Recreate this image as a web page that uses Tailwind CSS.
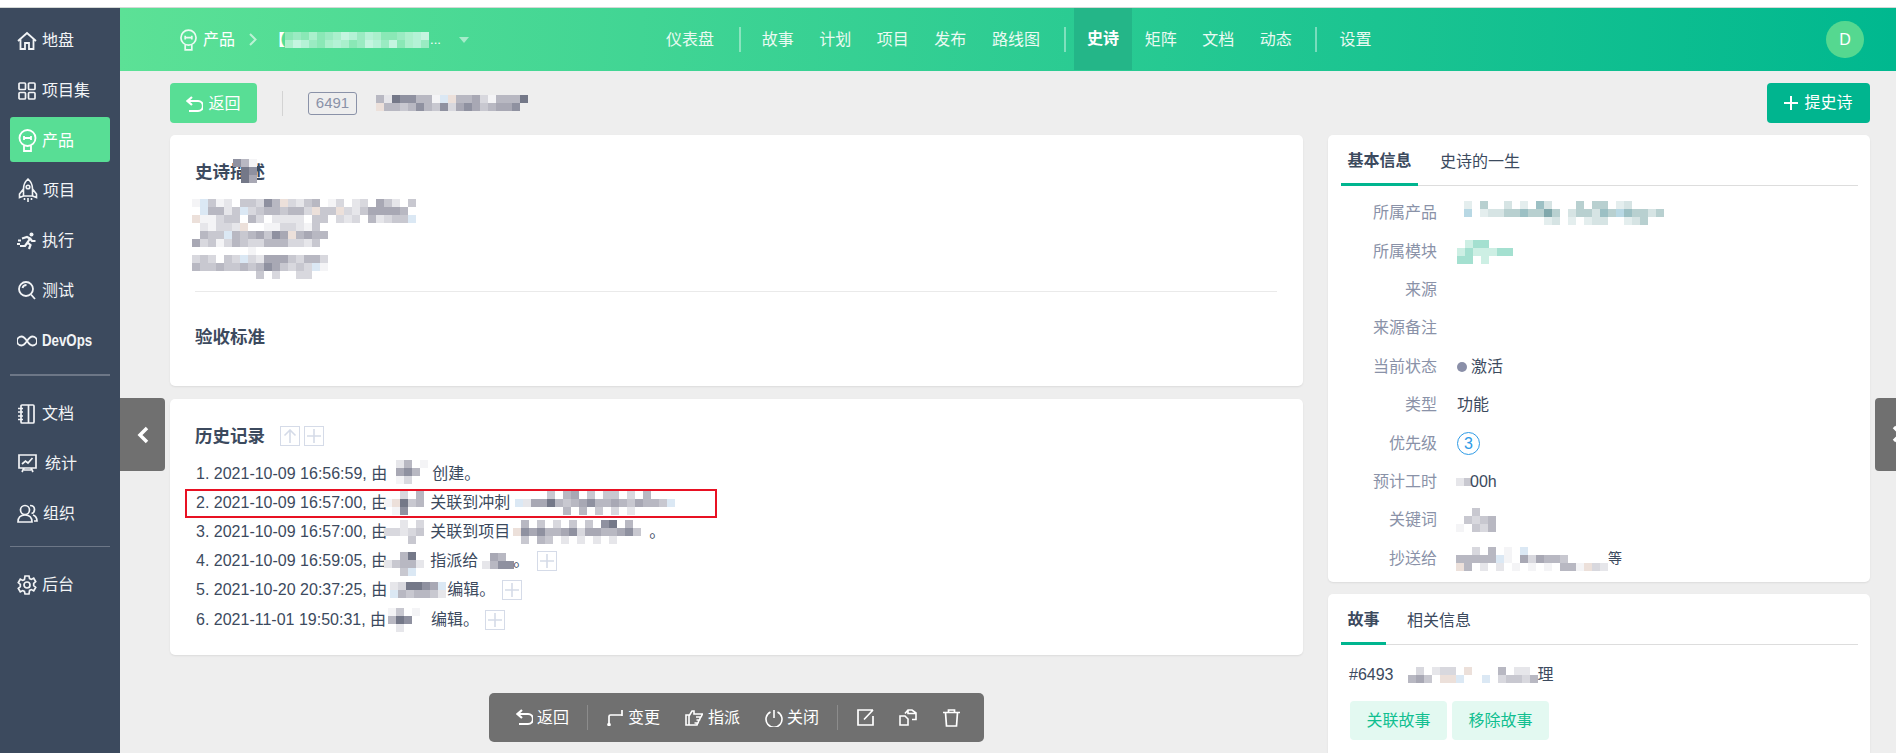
<!DOCTYPE html>
<html lang="zh-CN">
<head>
    <meta charset="UTF-8">
    <title>史诗详情</title>
    <script src="https://cdn.jsdelivr.net/npm/@tailwindcss/browser@4"></script>
</head>
<body class="w-[1896px] h-[753px] overflow-hidden bg-[#eeeeee] text-[16px] text-[#3c4a5e] font-['Liberation_Sans','Noto_Sans_CJK_SC',sans-serif]">
    <div class="h-[8px] bg-white border-b border-[#d4d8d6]"></div>
    <div class="flex h-[745px]">
        <!-- 左侧菜单 -->
        <nav class="w-[120px] shrink-0 bg-[#3c4a5e] px-[10px] pt-[9px] text-[#f2f4f6]">
            <div class="flex flex-col gap-[5px]">
                <a class="h-[45px] flex items-center gap-[5px] pl-[7px] pt-[2px]">
                    <svg class="w-[20px] h-[20px]" viewBox="0 0 20 20" fill="none" stroke="currentColor" stroke-width="1.8"><path d="M1 10 10 2l9 8M3.5 8.5V18h4.5v-6h4v6h4.5V8.5"/></svg>地盘</a>
                <a class="h-[45px] flex items-center gap-[6px] pl-[8px] pt-[2px]">
                    <svg class="w-[18px] h-[18px]" viewBox="0 0 18 18" fill="none" stroke="currentColor" stroke-width="1.7"><rect x="1" y="1" width="6.5" height="6.5" rx="1"/><rect x="10.5" y="1" width="6.5" height="6.5" rx="1"/><rect x="1" y="10.5" width="6.5" height="6.5" rx="1"/><rect x="10.5" y="10.5" width="6.5" height="6.5" rx="1"/></svg>项目集</a>
                <a class="h-[45px] flex items-center gap-[5px] pl-[8px] pt-[2px] bg-[#58de95] rounded-[3px] text-white">
                    <svg class="w-[19px] h-[23px]" viewBox="0 0 18 23" fill="none" stroke="currentColor" stroke-width="1.8"><circle cx="9" cy="9" r="8"/><path d="M5.5 16.5V22h7v-5.5M5.5 7v4M12.5 7v4M5.5 9h7"/></svg>产品</a>
                <a class="h-[45px] flex items-center gap-[5px] pl-[8px] pt-[2px]">
                    <svg class="w-[20px] h-[25px]" viewBox="0 0 20 25" fill="none" stroke="currentColor" stroke-width="1.6"><path d="M10 1c3.5 3 4.5 7 4.5 10v7h-9v-7C5.5 8 6.5 4 10 1ZM5.5 11 1.5 16v3.5l4-1.5M14.5 11l4 5v3.5l-4-1.500"/><circle cx="10" cy="9" r="1.8"/><path d="M6.5 20v2M10 20v4M13.5 20v2"/></svg>项目</a>
                <a class="h-[45px] flex items-center gap-[5px] pl-[7px] pt-[2px]">
                    <svg class="w-[20px] h-[18px]" viewBox="0 0 20 18" fill="none" stroke="currentColor" stroke-width="2.2"><circle cx="14.5" cy="2.5" r="2" fill="currentColor" stroke="none"/><path d="M5 6.5l5-1.500 3 1.500-2.500 4 3 2.500-1.500 4M10.500 10.500 8 14H3M13 6.500l2 2.500h3.500M1 8.500h3M0 12h3"/></svg>执行</a>
                <a class="h-[45px] flex items-center gap-[6px] pl-[8px] pt-[2px]">
                    <svg class="w-[18px] h-[19px]" viewBox="0 0 18 19" fill="none" stroke="currentColor" stroke-width="1.8"><circle cx="8" cy="8" r="7"/><path d="M13 13.5l4 4.5M4.5 7c.5-2 2-3 4-3"/></svg>测试</a>
                <a class="h-[45px] flex items-center gap-[5px] pl-[7px] pt-[2px] font-bold">
                    <svg class="w-[20px] h-[12px] shrink-0" viewBox="0 0 20 12" fill="none" stroke="currentColor" stroke-width="1.8"><path d="M10 6C8 3 6.5 1.5 4.5 1.5a4.5 4.5 0 0 0 0 9C6.5 10.5 8 9 10 6c2-3 3.5-4.5 5.5-4.5a4.5 4.5 0 0 1 0 9C13.5 10.5 12 9 10 6Z"/></svg>
                    <span class="inline-block origin-left scale-x-[0.83]">DevOps</span></a>
            </div>
            <div class="h-[2px] bg-[#6d7787] mt-[12px] mb-[14px]"></div>
            <div class="flex flex-col gap-[5px]">
                <a class="h-[45px] flex items-center gap-[7px] pl-[8px] pt-[2px]">
                    <svg class="w-[17px] h-[20px]" viewBox="0 0 17 20" fill="none" stroke="currentColor" stroke-width="1.7"><rect x="3" y="1" width="13" height="18" rx="1"/><path d="M10.5 1v18M0 4.5h5M0 8h5M0 12h5M0 15.5h5"/></svg>文档</a>
                <a class="h-[45px] flex items-center gap-[8px] pl-[8px] pt-[2px]">
                    <svg class="w-[19px] h-[19px]" viewBox="0 0 19 19" fill="none" stroke="currentColor" stroke-width="1.7"><path d="M1 1h17v13H1zM4 10l3.5-3 2.5 2 4.5-5M6 14l-2 4M13 14l2 4M6 16h7"/></svg>统计</a>
                <a class="h-[45px] flex items-center gap-[5px] pl-[7px] pt-[2px]">
                    <svg class="w-[21px] h-[19px]" viewBox="0 0 21 19" fill="none" stroke="currentColor" stroke-width="1.7"><circle cx="8" cy="6" r="4.5"/><path d="M1 18c0-5 3-7 7-7s7 2 7 7ZM13 1.5c3 0 4.5 2 4.5 4 0 2-1 3.5-3 4M16 11c2.5 1 4 3 4 6h-3"/></svg>组织</a>
            </div>
            <div class="h-px bg-[#6d7787] mt-[11px] mb-[14px]"></div>
            <a class="h-[45px] flex items-center gap-[5px] pl-[7px] pt-[2px]">
                <svg class="w-[20px] h-[20px]" viewBox="0 0 20 20" fill="none" stroke="currentColor" stroke-width="1.7"><path d="M8 1h4l.6 2.6 1.7.8 2.4-1.200 2 3.400-2 1.700v2.400l2 1.700-2 3.400-2.400-1.200-1.700.8L12 19H8l-.6-2.600-1.700-.8-2.400 1.200-2-3.400 2-1.700V9.300l-2-1.700 2-3.400 2.400 1.200 1.700-.8Z"/><circle cx="10" cy="10" r="3"/></svg>后台</a>
        </nav>

        <main class="relative flex-1 min-w-0 overflow-hidden">
            <!-- 顶部导航 -->
            <header class="h-[63px] flex items-center text-[#eafaf2] bg-[linear-gradient(92deg,#5ce196,#00b88f)]">
                <div class="w-[533px] pl-[60px] flex items-center shrink-0">
                    <svg class="w-[17px] h-[22px] mr-[6px]" viewBox="0 0 18 23" fill="none" stroke="currentColor" stroke-width="1.8"><circle cx="9" cy="9" r="8"/><path d="M5.5 16.5V22h7v-5.5M5.5 7v4M12.5 7v4M5.5 9h7"/></svg>
                    <span class="text-white">产品</span>
                    <svg class="w-[8px] h-[13px] ml-[14px] mr-[12px] text-white/60" viewBox="0 0 8 13" fill="none" stroke="currentColor" stroke-width="2"><path d="M1 1l5.500 5.500L1 12"/></svg>
                    <span class="w-[16px] text-white font-bold">【</span>
                    <svg data-m="abacabcedbdcaabcde/cedbacdcabedbeacdb" data-p="g" class="shrink-0"></svg>
                    <span class="text-[13px] text-white ml-[1px] w-[13px]">...</span>
                    <span class="ml-[16px] w-0 h-0 border-x-[5px] border-x-transparent border-t-[6px] border-t-white/50"></span>
                </div>
                <div class="flex items-center h-full">
                    <a class="pl-[13px] pr-[15px]">仪表盘</a>
                    <span class="w-[2px] h-[25px] bg-white/40 ml-[10px] mr-[8px]"></span>
                    <a class="w-[57.5px] text-center">故事</a>
                    <a class="w-[57.5px] text-center">计划</a>
                    <a class="w-[57.5px] text-center">项目</a>
                    <a class="w-[57.5px] text-center">发布</a>
                    <a class="pl-[13px] pr-[14px]">路线图</a>
                    <span class="w-[2px] h-[25px] bg-white/40 ml-[10px] mr-[8px]"></span>
                    <a class="w-[58px] h-[62px] mb-px flex items-center justify-center bg-[#24b688] text-white font-bold">史诗</a>
                    <a class="w-[57.5px] text-center">矩阵</a>
                    <a class="w-[57.5px] text-center">文档</a>
                    <a class="w-[57.5px] text-center">动态</a>
                    <span class="w-[2px] h-[25px] bg-white/40 ml-[10px] mr-[10px]"></span>
                    <a class="w-[58px] text-center">设置</a>
                </div>
                <div class="ml-auto mr-[32px] w-[38px] h-[37px] rounded-full bg-[#55d890] flex items-center justify-center text-white">D</div>
            </header>

            <!-- 工具栏 -->
            <div class="flex items-center h-[40px] mt-[12px] ml-[50px] mr-[26px]">
                <button class="h-[40px] w-[87px] bg-[#58de95] rounded-[4px] text-white flex items-center justify-center gap-[5px] pt-[2px]">
                    <svg class="w-[17px] h-[17px]" viewBox="0 0 17 17" fill="none" stroke="currentColor" stroke-width="2.2"><path d="M6 1 1.500 5 6 9M2 5h10a3.800 3.800 0 0 1 0 10H3"/></svg>返回
                </button>
                <span class="w-px h-[25px] bg-[#d3d3d3] ml-[25px] mr-[25px]"></span>
                <span class="w-[49px] h-[23px] border border-[#8a92a8] rounded-[3px] text-[#8a92a8] text-[15px] flex items-center justify-center">6491</span>
                <svg data-m="5287755 1bp5563 15558/p554575473 67645667" data-p="n" class="ml-[19px]"></svg>
                <button class="ml-auto h-[40px] w-[103px] bg-[#00b58f] rounded-[4px] text-white flex items-center justify-center gap-[6px]">
                    <svg class="w-[14px] h-[14px]" viewBox="0 0 14 14" stroke="currentColor" stroke-width="2"><path d="M7 0v14M0 7h14"/></svg>提史诗
                </button>
            </div>

            <div class="flex gap-[25px] mt-[12px] ml-[50px] mr-[26px]">
                <!-- 左栏 -->
                <div class="w-[1133px] flex flex-col gap-[13px]">
                    <section class="h-[251px] bg-white rounded-[5px] shadow-[0_1px_2px_rgba(0,0,0,0.08)] pl-[25px] pr-[26px] pt-[24px]">
                        <div class="relative">
                            <h2 class="h-[26px] leading-[26px] text-[17.5px] font-bold">史诗描述</h2>
                            <svg data-m="751/.87/.86" data-p="n" class="absolute left-[38px] top-0"></svg>
                        </div>
                        <svg data-m="1b412.44375p3245.13.23.642.4/.b5524b34554553p44p32466665/p1134 4.53.2222.44.323.5234 4b/.21332p..1133214/.544b5456476p5655/63413543355533 24/.......1/343.43b3266643553/5445445457643 43b1/........4.3..33" data-p="n" class="-ml-[3px] mt-[14px] h-[80px]"></svg>
                        <div class="h-px bg-[#eaeaea] mt-[12px]"></div>
                        <h2 class="h-[26px] leading-[26px] text-[17.5px] font-bold mt-[32px]">验收标准</h2>
                    </section>

                    <section class="h-[256px] bg-white rounded-[5px] shadow-[0_1px_2px_rgba(0,0,0,0.08)] pl-[25px] pt-[24px]">
                        <div class="flex items-center h-[26px]">
                            <h2 class="text-[17.5px] font-bold">历史记录</h2>
                            <span class="ml-[15px] w-[20px] h-[20px] border border-[#d5dbe8] flex items-center justify-center text-[#d5dbe8]">
                                <svg class="w-[14px] h-[14px]" viewBox="0 0 14 14" fill="none" stroke="currentColor" stroke-width="1.6"><path d="M7 14V1M1.500 6.500 7 1l5.500 5.500"/></svg>
                            </span>
                            <span class="ml-[4px] w-[20px] h-[20px] border border-[#d5dbe8] flex items-center justify-center text-[#d5dbe8]">
                                <svg class="w-[14px] h-[14px]" viewBox="0 0 14 14" stroke="currentColor" stroke-width="1.6"><path d="M7 0v14M0 7h14"/></svg>
                            </span>
                        </div>
                        <ol class="mt-[10px] pl-px">
                            <li class="h-[29.2px] flex items-center">1. 2021-10-09 16:56:59, 由
                                <svg data-m=".25.1/.675/.13." data-p="n" class="ml-[1px] -mt-[4px]"></svg>
                                <span class="ml-[4px]">创建。</span></li>
                            <li class="h-[29.2px] flex items-center">2. 2021-10-09 16:57:00, 由
                                <svg data-m="..3.5/1p845/.17.." data-p="n" class="-ml-[3px]"></svg>
                                <span class="ml-[6px]">关联到冲刺</span>
                                <svg data-m="....4.56.4.44.3.5../b266854567556546554b/......5.5.4.3.2..." data-p="n" class="ml-[5px]"></svg></li>
                            <li class="h-[29.2px] flex items-center">3. 2021-10-09 16:57:00, 由
                                <svg data-m="..2.3/33234/...4." data-p="n" class="-ml-[3px]"></svg>
                                <span class="ml-[6px]">关联到项目</span>
                                <svg data-m=".5.4.3.4.4.78.5./p767556736655674/.4.54.2.2.2.2...." data-p="n" class="ml-[3px]"></svg>
                                <span>。</span></li>
                            <li class="h-[29.2px] flex items-center">4. 2021-10-09 16:59:05, 由
                                <svg data-m="..58./24552/..4b." data-p="n" class="-ml-[3px] mt-[6px]"></svg>
                                <span class="ml-[6px]">指派给</span>
                                <svg data-m=".65/2577" data-p="n" class="ml-[4px]"></svg>
                                <span class="-ml-[1px]">。</span>
                                <span class="ml-[8px] w-[20px] h-[20px] border border-[#d5dbe8] flex items-center justify-center text-[#d5dbe8]"><svg class="w-[14px] h-[14px]" viewBox="0 0 14 14" stroke="currentColor" stroke-width="1.6"><path d="M7 0v14M0 7h14"/></svg></span></li>
                            <li class="h-[29.2px] flex items-center">5. 2021-10-20 20:37:25, 由
                                <svg data-m="238876b/b545542" data-p="n" class="ml-[3px]"></svg>
                                <span class="ml-[1px]">编辑。</span>
                                <span class="ml-[7px] w-[20px] h-[20px] border border-[#d5dbe8] flex items-center justify-center text-[#d5dbe8]"><svg class="w-[14px] h-[14px]" viewBox="0 0 14 14" stroke="currentColor" stroke-width="1.6"><path d="M7 0v14M0 7h14"/></svg></span></li>
                            <li class="h-[29.2px] flex items-center">6. 2021-11-01 19:50:31, 由
                                <svg data-m="14.1/587./.2.." data-p="n" class="ml-[2px]"></svg>
                                <span class="ml-[11px]">编辑。</span>
                                <span class="ml-[6px] w-[20px] h-[20px] border border-[#d5dbe8] flex items-center justify-center text-[#d5dbe8]"><svg class="w-[14px] h-[14px]" viewBox="0 0 14 14" stroke="currentColor" stroke-width="1.6"><path d="M7 0v14M0 7h14"/></svg></span></li>
                        </ol>
                    </section>
                </div>

                <!-- 右栏 -->
                <div class="w-[542px] flex flex-col gap-[12px]">
                    <section class="h-[447px] bg-white rounded-[5px] shadow-[0_1px_2px_rgba(0,0,0,0.08)] pl-[13px] pr-[12px]">
                        <div class="h-[51px] flex border-b-[1px] border-[#dddddd]">
                            <a class="w-[77px] h-[51px] pt-[3px] border-b-[3px] border-[#00b58f] flex items-center justify-center font-bold">基本信息</a>
                            <a class="ml-[22px] h-[51px] pt-[3px] flex items-center">史诗的一生</a>
                        </div>
                        <dl class="mt-[8px] text-[#8a92a8]">
                            <div class="h-[38.4px] flex items-center"><dt class="w-[96px] text-right">所属产品</dt><dd><svg data-m="f.h..g.f.ig...h.hh.fg.../k.fgghhihhjh.ghhgihkihhgh/..........fg.f.fgg..fgh" data-p="t" class="ml-[27px]"></svg></dd></div>
                            <div class="h-[38.4px] flex items-center"><dt class="w-[96px] text-right">所属模块</dt><dd><svg data-m=".lmm/lmlllmm./mm.l.." data-p="t" class="ml-[20px]"></svg></dd></div>
                            <div class="h-[38.4px] flex items-center"><dt class="w-[96px] text-right">来源</dt></div>
                            <div class="h-[38.4px] flex items-center"><dt class="w-[96px] text-right">来源备注</dt></div>
                            <div class="h-[38.4px] flex items-center"><dt class="w-[96px] text-right">当前状态</dt><dd class="ml-[20px] flex items-center gap-[4px] text-[#3c4a5e]"><span class="w-[10px] h-[10px] rounded-full bg-[#8a8fa8]"></span>激活</dd></div>
                            <div class="h-[38.4px] flex items-center"><dt class="w-[96px] text-right">类型</dt><dd class="ml-[20px] text-[#3c4a5e]">功能</dd></div>
                            <div class="h-[38.4px] flex items-center"><dt class="w-[96px] text-right">优先级</dt><dd class="ml-[20px] w-[23px] h-[23px] border border-[#2e9be6] rounded-full text-[#2e9be6] flex items-center justify-center">3</dd></div>
                            <div class="h-[38.4px] flex items-center"><dt class="w-[96px] text-right">预计工时</dt><dd class="ml-[19px] flex items-center text-[#3c4a5e]"><svg data-m="24" data-p="n" class="h-[14px]"></svg><span class="-ml-[2px]">00h</span></dd></div>
                            <div class="h-[38.4px] flex items-center"><dt class="w-[96px] text-right">关键词</dt><dd><svg data-m="..4.. /.4345/1.435" data-p="n" class="ml-[19px]"></svg></dd></div>
                            <div class="h-[38.4px] flex items-center"><dt class="w-[96px] text-right">抄送给</dt><dd class="flex items-center text-[#3c4a5e]"><svg data-m="..3.5.1.b/55555 b1.63 655 4/p5.2.2.1.1.1.55 1p32" data-p="n" class="ml-[19px]"></svg><span class="text-[14px]">等</span></dd></div>
                        </dl>
                    </section>

                    <section class="h-[200px] bg-white rounded-[5px] shadow-[0_1px_2px_rgba(0,0,0,0.08)] pl-[13px] pr-[12px]">
                        <div class="h-[51px] flex border-b-[1px] border-[#dddddd]">
                            <a class="w-[45px] h-[51px] pt-[3px] border-b-[3px] border-[#00b58f] flex items-center justify-center font-bold">故事</a>
                            <a class="ml-[21px] h-[51px] pt-[3px] flex items-center">相关信息</a>
                        </div>
                        <div class="h-[46px] mt-[7px] flex items-center pl-[8px]">#6493
                            <svg data-m=".3.233.p/564.ppb" data-p="n" class="ml-[14px]"></svg>
                            <svg data-m="..5.22./b.34435" data-p="n" class="ml-[10px]"></svg>
                            <span>理</span>
                        </div>
                        <div class="flex gap-[5px] ml-[9px] mt-[3px]">
                            <button class="w-[97px] h-[39px] rounded-[4px] bg-[#e3f9f1] text-[#10bf90]">关联故事</button>
                            <button class="w-[97px] h-[39px] rounded-[4px] bg-[#e3f9f1] text-[#10bf90]">移除故事</button>
                        </div>
                    </section>
                </div>
            </div>

            <!-- 左右折叠按钮 -->
            <div class="absolute left-0 top-[390px] w-[45px] h-[73px] bg-[#707070] rounded-r-[4px] flex items-center justify-center text-white">
                <svg class="w-[12px] h-[18px]" viewBox="0 0 12 18" fill="none" stroke="currentColor" stroke-width="3.5"><path d="M10 2 3 9l7 7"/></svg>
            </div>
            <div class="absolute right-0 top-[390px] w-[21px] h-[73px] bg-[#707070] rounded-l-[4px] overflow-hidden text-white">
                <svg class="absolute left-[17px] top-[27px] w-[12px] h-[18px]" viewBox="0 0 12 18" fill="none" stroke="currentColor" stroke-width="3.5"><path d="M2 2l7 7-7 7"/></svg>
            </div>

            <!-- 历史记录高亮框 -->
            <div class="absolute left-[65px] top-[481px] w-[532px] h-[29px] border-2 border-[#e81123]"></div>

            <!-- 底部操作条 -->
            <div class="absolute left-[369px] top-[685px] w-[495px] h-[49px] bg-[#707070] rounded-[5px] flex items-center pl-[27px] text-white">
                <svg class="w-[17px] h-[17px]" viewBox="0 0 17 17" fill="none" stroke="currentColor" stroke-width="2.2"><path d="M6 1 1.500 5 6 9M2 5h10a3.800 3.800 0 0 1 0 10H3"/></svg>
                <span class="ml-[4px]">返回</span>
                <span class="w-px h-[25px] bg-white/20 ml-[18px] mr-[19px]"></span>
                <svg class="w-[17px] h-[17px]" viewBox="0 0 17 17" fill="none" stroke="currentColor" stroke-width="1.7"><path d="M2 16V7.500a1.500 1.500 0 0 1 1.500-1.500H15M15 1v6"/><circle cx="2" cy="15.500" r="1" fill="currentColor"/></svg>
                <span class="ml-[4px]">变更</span>
                <svg class="ml-[25px] w-[18px] h-[17px]" viewBox="0 0 18 17" fill="none" stroke="currentColor" stroke-width="1.6"><path d="M1 6h3v10H1zM4 7l3-5h2v3h8.500l-1.500 3h-5M15.500 8l-1 3h-3M14 11l-1 3H9.500M12.500 14l-.5 2H4"/></svg>
                <span class="ml-[5px]">指派</span>
                <svg class="ml-[25px] w-[18px] h-[18px]" viewBox="0 0 18 18" fill="none" stroke="currentColor" stroke-width="1.6"><path d="M5.500 3a8 8 0 1 0 7 0M9 1v8"/></svg>
                <span class="ml-[4px]">关闭</span>
                <span class="w-px h-[25px] bg-white/20 ml-[18px] mr-[19px]"></span>
                <svg class="w-[17px] h-[17px]" viewBox="0 0 17 17" fill="none" stroke="currentColor" stroke-width="1.7"><path d="M16 1H1v15h15V7M16 1 7 10.500"/></svg>
                <svg class="ml-[25px] w-[18px] h-[17px]" viewBox="0 0 18 17" fill="none" stroke="currentColor" stroke-width="1.6"><path d="M1 7h5l3 3v6H1zM6 4.500 9 1h4l4 3v6.500h-4M9 1v3.500h8"/></svg>
                <svg class="ml-[26px] w-[17px] h-[18px]" viewBox="0 0 17 18" fill="none" stroke="currentColor" stroke-width="1.7"><path d="M0 3.500h17M5.500 3.500V1h6v2.500M2.500 3.500l1 13.500h10l1-13.500"/></svg>
            </div>
        </main>
    </div>

    <script>
        // 打码区域：每个字符是一格 8px 的色块
        const palettes = {
            n: { 1:'#f4f4f6', 2:'#e6e6ea', 3:'#d8d8de', 4:'#c8c8d0', 5:'#b8b8c2', 6:'#a8a8b4', 7:'#8f91a0', 8:'#747888', b:'#dbe8f4', p:'#ece0da' },
            g: { a:'#8ae8b6', b:'#9aebc2', c:'#aaf0cc', d:'#b4f2d6', e:'#c4f5e0' },
            t: { f:'#e4eeee', g:'#d6e4e4', h:'#b8d0d0', i:'#9cc0c4', j:'#80a8ac', k:'#b8d8e4', l:'#cdefe4', m:'#a4e0d0' }
        };
        document.querySelectorAll('svg[data-m]').forEach(svg => {
            const rows = svg.dataset.m.split('/').map(r => r.replace(/\s/g, ''));
            const colors = palettes[svg.dataset.p];
            const cols = Math.max(...rows.map(r => r.length));
            svg.setAttribute('width', cols * 8);
            svg.setAttribute('height', rows.length * 8);
            svg.setAttribute('viewBox', `0 0 ${cols * 8} ${rows.length * 8}`);
            svg.style.flexShrink = 0;
            rows.forEach((row, y) => [...row].forEach((ch, x) => {
                if (!colors[ch]) return;
                const rect = document.createElementNS('http://www.w3.org/2000/svg', 'rect');
                rect.setAttribute('x', x * 8);
                rect.setAttribute('y', y * 8);
                rect.setAttribute('width', 8);
                rect.setAttribute('height', 8);
                rect.setAttribute('fill', colors[ch]);
                svg.appendChild(rect);
            }));
        });
    </script>
</body>
</html>
